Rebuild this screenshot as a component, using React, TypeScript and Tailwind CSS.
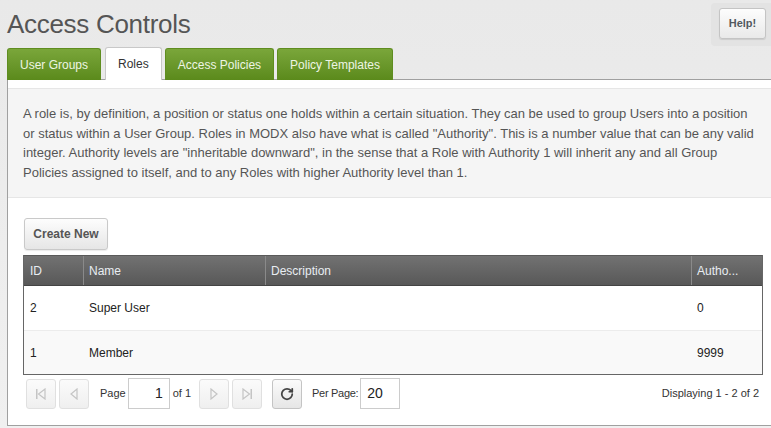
import { RotateCw } from "lucide-react";

const rows = [
  { id: "2", name: "Super User", description: "", authority: "0" },
  { id: "1", name: "Member", description: "", authority: "9999" },
];

const tabs = ["User Groups", "Roles", "Access Policies", "Policy Templates"];

function PageButton({ kind, disabled = true }: { kind: "first" | "prev" | "next" | "last"; disabled?: boolean }) {
  const color = disabled ? "#c4c4c4" : "#555";
  return (
    <button className="w-[30px] h-[30px] rounded-[3px] border border-[#e0e0e0] bg-gradient-to-b from-[#fbfbfb] to-[#efefef] flex items-center justify-center">
      <svg width="12" height="12" viewBox="0 0 12 12">
        {kind === "first" && (
          <>
            <rect x="1" y="1" width="1.5" height="10" fill={color} />
            <path d="M10 1 L10 11 L3.5 6 Z" fill="none" stroke={color} strokeWidth="1.2" />
          </>
        )}
        {kind === "prev" && <path d="M9 1 L9 11 L3 6 Z" fill="none" stroke={color} strokeWidth="1.2" />}
        {kind === "next" && <path d="M3 1 L3 11 L9 6 Z" fill="none" stroke={color} strokeWidth="1.2" />}
        {kind === "last" && (
          <>
            <rect x="9.5" y="1" width="1.5" height="10" fill={color} />
            <path d="M2 1 L2 11 L8.5 6 Z" fill="none" stroke={color} strokeWidth="1.2" />
          </>
        )}
      </svg>
    </button>
  );
}

export default function App() {
  return (
    <div className="w-[771px] h-[428px] overflow-hidden bg-gradient-to-b from-[#e9e9e9] to-[#f0f0f0] font-['Liberation_Sans',Arial,sans-serif] text-[#555]">
      <div className="flex items-start justify-between h-[47px]">
        <h1 className="pl-[7px] pt-[9px] text-[26px] leading-[30px] text-[#555] tracking-[-0.3px]">Access Controls</h1>
        <div className="mt-[3px] w-[60px] h-[43px] rounded-l-[4px] bg-[#e3e3e3] pl-[8px] pt-[5px]">
          <button className="w-[47px] h-[31px] rounded-[3px] border border-[#c4c4c4] bg-gradient-to-b from-[#fdfdfd] to-[#e9e9e9] text-[11px] font-bold text-[#53595f] shadow-[0_1px_1px_rgba(0,0,0,0.1)]">
            Help!
          </button>
        </div>
      </div>

      <div className="ml-[7px] flex items-end gap-[3px] h-[33px] relative z-10">
        {tabs.map((tab) =>
          tab === "Roles" ? (
            <div
              key={tab}
              className="ml-px h-[33px] px-[12px] flex items-center rounded-t-[3px] border border-b-0 border-[#c8c8c8] bg-white text-[12px] text-[#333]"
            >
              {tab}
            </div>
          ) : (
            <div
              key={tab}
              className="h-[32px] px-[12px] flex items-center rounded-t-[3px] border border-b-0 border-[#5f8d20] bg-gradient-to-b from-[#7aa63a] to-[#5b8a1b] text-[12px] text-[#eef5e4]"
            >
              {tab}
            </div>
          )
        )}
      </div>

      <div className="ml-[7px] -mt-px border-t border-l border-b border-[#a0a0a0] bg-white h-[347px]">
        <div className="mt-[8px] bg-[#f5f5f5] border-t border-b border-[#e6e6e6] px-[15px] pt-[15px] h-[110px]">
          <p className="text-[13px] leading-[19.5px] text-[#555]">
            A role is, by definition, a position or status one holds within a certain situation. They can be used to group Users into a position or status within a User Group. Roles in MODX also have what is called "Authority". This is a number value that can be any valid integer. Authority levels are "inheritable downward", in the sense that a Role with Authority 1 will inherit any and all Group Policies assigned to itself, and to any Roles with higher Authority level than 1.
          </p>
        </div>

        <div className="pl-[15px] pr-[8px] pt-[20px]">
          <button className="ml-px w-[84px] h-[32px] rounded-[3px] border border-[#c9c9c9] bg-gradient-to-b from-[#fdfdfd] to-[#e6e6e6] text-[12px] font-bold text-[#555] shadow-[0_1px_1px_rgba(0,0,0,0.08)]">
            Create New
          </button>

          <div className="mt-[5px] border border-t-0 border-[#666] w-[740px]">
            <div className="flex h-[31px] bg-gradient-to-b from-[#727272] to-[#585858] border-t border-[#5a5a5a] border-b border-b-[#444] text-[12px] text-[#e8edf2]">
              <div className="w-[60px] px-[6px] flex items-center border-r border-[#8a8a8a]">ID</div>
              <div className="w-[182px] px-[5px] flex items-center border-r border-[#8a8a8a]">Name</div>
              <div className="w-[426px] px-[5px] flex items-center border-r border-[#8a8a8a]">Description</div>
              <div className="flex-1 px-[5px] flex items-center">Autho...</div>
            </div>
            {rows.map((row, i) => (
              <div
                key={row.id}
                className={`flex h-[44px] items-center text-[12px] text-[#222] ${i === 1 ? "bg-[#f9f9f9] border-t border-[#ececec] h-[43px]" : "bg-white"}`}
              >
                <div className="w-[60px] px-[6px]">{row.id}</div>
                <div className="w-[182px] px-[5px]">{row.name}</div>
                <div className="w-[426px] px-[5px]">{row.description}</div>
                <div className="flex-1 px-[5px]">{row.authority}</div>
              </div>
            ))}
          </div>

          <div className="mt-[3px] flex items-center h-[31px] text-[11px] text-[#333]">
            <div className="ml-[3px] flex gap-[3px]">
              <PageButton kind="first" />
              <PageButton kind="prev" />
            </div>
            <span className="ml-[11px]">Page</span>
            <div className="ml-[2px] w-[42px] h-[31px] border border-[#ccc] bg-white flex items-center justify-end pr-[6px] text-[14px] text-[#222]">1</div>
            <span className="ml-[3px]">of 1</span>
            <div className="ml-[8px] flex gap-[3px]">
              <PageButton kind="next" />
              <PageButton kind="last" />
            </div>
            <button className="ml-[10px] w-[30px] h-[30px] rounded-[3px] border border-[#c4c4c4] bg-gradient-to-b from-[#fbfbfb] to-[#e6e6e6] flex items-center justify-center">
              <RotateCw size={14} strokeWidth={3} color="#444" />
            </button>
            <span className="ml-[10px] tracking-[-0.3px]">Per Page:</span>
            <div className="ml-[2px] w-[40px] h-[31px] border border-[#ccc] bg-white flex items-center pl-[6px] text-[14px] text-[#222]">20</div>
            <span className="ml-auto mr-[4px]">Displaying 1 - 2 of 2</span>
          </div>
        </div>
      </div>
    </div>
  );
}
